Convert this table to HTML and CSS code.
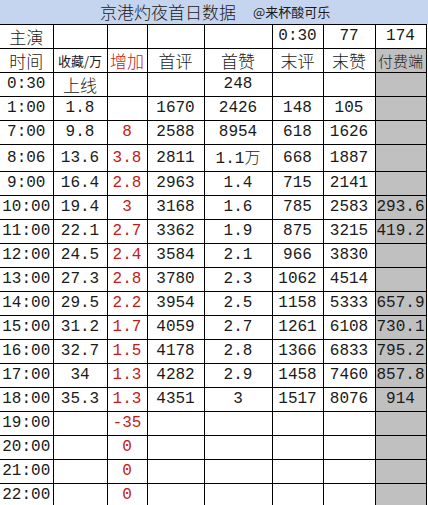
FILE: index.html
```html
<!DOCTYPE html>
<html lang="zh">
<head>
<meta charset="utf-8">
<title>京港灼夜首日数据</title>
<link rel="stylesheet" href="styles.css">
</head>
<body>
<div class="sheet">
  <div class="title-bar">
    <span class="title">京港灼夜首日数据</span>
    <span class="author">@来杯酸可乐</span>
  </div>
  <table class="grid">
    <colgroup>
      <col class="c1"><col class="c2"><col class="c3"><col class="c4">
      <col class="c5"><col class="c6"><col class="c7"><col class="c8">
    </colgroup>
    <tbody>
      <tr><td class="cn">主演</td><td></td><td></td><td></td><td></td><td class="num">0:30</td><td class="num">77</td><td class="num">174</td></tr>
      <tr><td class="cn">时间</td><td class="cn small">收藏/万</td><td class="cn red">增加</td><td class="cn">首评</td><td class="cn">首赞</td><td class="cn">末评</td><td class="cn">末赞</td><td class="cn pay gray">付费端</td></tr>
      <tr><td class="num">0:30</td><td class="cn">上线</td><td></td><td></td><td class="num">248</td><td></td><td></td><td class="gray"></td></tr>
      <tr><td class="num">1:00</td><td class="num">1.8</td><td></td><td class="num">1670</td><td class="num">2426</td><td class="num">148</td><td class="num">105</td><td class="gray"></td></tr>
      <tr><td class="num">7:00</td><td class="num">9.8</td><td class="num red">8</td><td class="num">2588</td><td class="num">8954</td><td class="num">618</td><td class="num">1626</td><td class="gray"></td></tr>
      <tr><td class="num">8:06</td><td class="num">13.6</td><td class="num red">3.8</td><td class="num">2811</td><td class="num">1.1<span class="cn-in">万</span></td><td class="num">668</td><td class="num">1887</td><td class="gray"></td></tr>
      <tr><td class="num">9:00</td><td class="num">16.4</td><td class="num red">2.8</td><td class="num">2963</td><td class="num">1.4</td><td class="num">715</td><td class="num">2141</td><td class="gray"></td></tr>
      <tr><td class="num">10:00</td><td class="num">19.4</td><td class="num red">3</td><td class="num">3168</td><td class="num">1.6</td><td class="num">785</td><td class="num">2583</td><td class="num gray">293.6</td></tr>
      <tr><td class="num">11:00</td><td class="num">22.1</td><td class="num red">2.7</td><td class="num">3362</td><td class="num">1.9</td><td class="num">875</td><td class="num">3215</td><td class="num gray">419.2</td></tr>
      <tr><td class="num">12:00</td><td class="num">24.5</td><td class="num red">2.4</td><td class="num">3584</td><td class="num">2.1</td><td class="num">966</td><td class="num">3830</td><td class="gray"></td></tr>
      <tr><td class="num">13:00</td><td class="num">27.3</td><td class="num red">2.8</td><td class="num">3780</td><td class="num">2.3</td><td class="num">1062</td><td class="num">4514</td><td class="gray"></td></tr>
      <tr><td class="num">14:00</td><td class="num">29.5</td><td class="num red">2.2</td><td class="num">3954</td><td class="num">2.5</td><td class="num">1158</td><td class="num">5333</td><td class="num gray">657.9</td></tr>
      <tr><td class="num">15:00</td><td class="num">31.2</td><td class="num red">1.7</td><td class="num">4059</td><td class="num">2.7</td><td class="num">1261</td><td class="num">6108</td><td class="num gray">730.1</td></tr>
      <tr><td class="num">16:00</td><td class="num">32.7</td><td class="num red">1.5</td><td class="num">4178</td><td class="num">2.8</td><td class="num">1366</td><td class="num">6833</td><td class="num gray">795.2</td></tr>
      <tr><td class="num">17:00</td><td class="num">34</td><td class="num red">1.3</td><td class="num">4282</td><td class="num">2.9</td><td class="num">1458</td><td class="num">7460</td><td class="num gray">857.8</td></tr>
      <tr><td class="num">18:00</td><td class="num">35.3</td><td class="num red">1.3</td><td class="num">4351</td><td class="num">3</td><td class="num">1517</td><td class="num">8076</td><td class="num gray">914</td></tr>
      <tr><td class="num">19:00</td><td></td><td class="num red">-35</td><td></td><td></td><td></td><td></td><td class="gray"></td></tr>
      <tr><td class="num">20:00</td><td></td><td class="num red">0</td><td></td><td></td><td></td><td></td><td class="gray"></td></tr>
      <tr><td class="num">21:00</td><td></td><td class="num red">0</td><td></td><td></td><td></td><td></td><td class="gray"></td></tr>
      <tr><td class="num">22:00</td><td></td><td class="num red">0</td><td></td><td></td><td></td><td></td><td class="gray"></td></tr>
    </tbody>
  </table>
</div>
</body>
</html>
```

FILE: styles.css
```css
html, body {
  margin: 0;
  padding: 0;
  background: #ffffff;
}

.sheet {
  width: 428px;
  height: 505px;
  overflow: hidden;
  background: #ffffff;
}

.title-bar {
  height: 24px;
  background: #c6d5ef;
  display: flex;
  align-items: center;
  padding-left: 100px;
  box-sizing: border-box;
  color: #1a1a1a;
}

.title {
  font-family: "Noto Sans CJK SC", sans-serif;
  font-size: 17px;
  line-height: 24px;
  font-weight: 300;
}

.author {
  font-family: "Noto Sans CJK SC", sans-serif;
  font-size: 13px;
  line-height: 24px;
  margin-left: 17px;
  font-weight: 400;
}

.grid {
  border-collapse: collapse;
  table-layout: fixed;
  width: 426px;
}

.c1 { width: 53px; }
.c2 { width: 54px; }
.c3 { width: 40px; }
.c4 { width: 57px; }
.c5 { width: 68px; }
.c6 { width: 51px; }
.c7 { width: 52px; }
.c8 { width: 51px; }

.grid td {
  border: 1px solid #000;
  height: 23px;
  padding: 0;
  text-align: center;
  vertical-align: middle;
  white-space: nowrap;
  overflow: hidden;
  color: #1a1a1a;
  line-height: 23px;
}

.grid td:first-child {
  border-left: none;
}

.num {
  font-family: "Liberation Mono", monospace;
  font-size: 16px;
}

.cn {
  font-family: "Noto Sans CJK SC", sans-serif;
  font-size: 17px;
  font-weight: 300;
}

.cn-in {
  font-family: "Noto Sans CJK SC", sans-serif;
  font-size: 16px;
  font-weight: 300;
}

.small {
  font-size: 13px;
  font-weight: 400;
}

.pay {
  font-size: 15px;
}

.red {
  color: #c41a1a !important;
}

.gray {
  background: #c0c0c0;
}
```
